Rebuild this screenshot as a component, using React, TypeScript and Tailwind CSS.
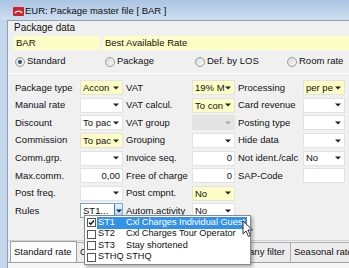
import React from "react";

const YEL = "bg-[#fdfdc6]";

type Cell =
  | { kind: "drop"; value?: string; yellow?: boolean; disabled?: boolean }
  | { kind: "num"; value: string }
  | { kind: "text"; value?: string }
  | { kind: "none" };

type Row = [string, Cell, string, Cell, string, Cell];

const rows: Row[] = [
  ["Package type", { kind: "drop", value: "Accon", yellow: true }, "VAT", { kind: "drop", value: "19% M", yellow: true }, "Processing", { kind: "drop", value: "per pe", yellow: true }],
  ["Manual rate", { kind: "drop" }, "VAT calcul.", { kind: "drop", value: "To con", yellow: true }, "Card revenue", { kind: "drop" }],
  ["Discount", { kind: "drop", value: "To pac" }, "VAT group", { kind: "drop", disabled: true }, "Posting type", { kind: "drop" }],
  ["Commission", { kind: "drop", value: "To pac", yellow: true }, "Grouping", { kind: "drop" }, "Hide data", { kind: "drop" }],
  ["Comm.grp.", { kind: "drop" }, "Invoice seq.", { kind: "num", value: "0" }, "Not ident./calc", { kind: "drop", value: "No" }],
  ["Max.comm.", { kind: "num", value: "0,00" }, "Free of charge", { kind: "num", value: "0" }, "SAP-Code", { kind: "text" }],
  ["Post freq.", { kind: "drop" }, "Post cmpnt.", { kind: "drop", value: "No", yellow: true }, "", { kind: "none" }],
  ["Rules", { kind: "none" }, "Autom.activity", { kind: "drop", value: "No" }, "", { kind: "none" }],
];

const Arrow = ({ gray }: { gray?: boolean }) => (
  <svg width="6" height="4" viewBox="0 0 6 4" className="shrink-0">
    <path d="M0 0.5 H6 L3 3.5 Z" fill={gray ? "#a8a8a8" : "#222"} />
  </svg>
);

const Field = ({ cell }: { cell: Cell }) => {
  if (cell.kind === "none") return <div />;
  if (cell.kind === "num" || cell.kind === "text")
    return (
      <div className="flex h-[15px] items-center justify-end self-center border border-[#e2e2e2] bg-white pr-[2px] leading-none">
        {cell.value}
      </div>
    );
  const bg = cell.disabled ? "bg-[#e4e4e4]" : cell.yellow ? YEL : "bg-white";
  return (
    <div className={`flex h-[15px] items-center self-center border border-[#e2e2e2] ${bg} pl-[2px] pr-[3px] leading-none`}>
      <span className="flex-1 overflow-hidden whitespace-nowrap">{cell.value}</span>
      <Arrow gray={cell.disabled} />
    </div>
  );
};

const Label = ({ text, first }: { text: string; first?: boolean }) => (
  <div className={`flex items-center overflow-hidden whitespace-nowrap ${first ? "" : "pl-[3px]"}`}>{text}</div>
);

const Radio = ({ label, checked }: { label: string; checked?: boolean }) => (
  <div className="flex items-center gap-[2px]">
    <div className="flex h-[10px] w-[10px] items-center justify-center rounded-full border border-[#9a9a9a] bg-gradient-to-br from-[#d8d8d8] to-[#fafafa]">
      {checked && <div className="h-[4px] w-[4px] rounded-full bg-[#2d4f78]" />}
    </div>
    <span>{label}</span>
  </div>
);

const Check = ({ checked }: { checked?: boolean }) => (
  <div className="flex h-[9px] w-[9px] shrink-0 items-center justify-center border border-[#555] bg-white">
    {checked && (
      <svg width="7" height="7" viewBox="0 0 7 7">
        <path d="M1 3.5 L2.8 5.3 L6 1.5" stroke="#111" strokeWidth="1.4" fill="none" />
      </svg>
    )}
  </div>
);

const items = [
  ["ST1", "Cxl Charges Individual Guest"],
  ["ST2", "Cxl Charges Tour Operator"],
  ["ST3", "Stay shortened"],
  ["STHQ", "STHQ"],
];

export default function App() {
  return (
    <div className="relative flex h-[268px] w-[349px] flex-col overflow-hidden bg-[#c4d6eb] font-['Liberation_Sans',Arial,sans-serif] text-[9.5px] text-[#111]">
      {/* title bar */}
      <div className="flex h-[20px] shrink-0 items-center bg-gradient-to-b from-[#aac4e2] to-[#d0dff0] pl-[13px] pt-[3px]">
        <svg width="11" height="9" viewBox="0 0 11 9" className="mr-[1px]">
          <rect width="11" height="9" rx="1" fill="#d3202a" />
          <path d="M2 6.2 C3 3.4 8 3.4 9 6.2" stroke="#fff" strokeWidth="1.2" fill="none" />
        </svg>
        <span className="text-[9.5px] text-[#111]">EUR: Package master file [ BAR ]</span>
      </div>

      <div className="flex flex-1 pl-[7px]">
        <div className="flex flex-1 flex-col border-l border-t border-[#8ea2bb] bg-[#f0f0f0]">
          {/* package data */}
          <div className="pl-[6px] pt-[1px] text-[10px] leading-[12px]">Package data</div>
          <div className="mt-[2px] flex h-[14px] gap-[3px] pl-[6px]">
            <div className={`flex w-[86px] items-center ${YEL} pl-[2px]`}>BAR</div>
            <div className={`flex flex-1 items-center ${YEL} pl-[2px]`}>Best Available Rate</div>
          </div>
          <div className="mt-[4px] flex h-[15px] items-center pl-[7px]">
            <div className="w-[90px]"><Radio label="Standard" checked /></div>
            <div className="w-[90px]"><Radio label="Package" /></div>
            <div className="w-[92px]"><Radio label="Def. by LOS" /></div>
            <Radio label="Room rate" />
          </div>
          <div className="mt-[4px] h-px bg-white" />

          {/* form grid */}
          <div className="mt-[5px] grid auto-rows-[17.6px] grid-cols-[65px_43px_69px_43px_68px_42px] pl-[7px]">
            {rows.map((r, i) => (
              <React.Fragment key={i}>
                <Label text={r[0]} first />
                {i === 7 ? (
                  <div className="flex h-[15px] self-center border border-[#7aa7d6] bg-white leading-none">
                    <span className="flex flex-1 items-center overflow-hidden whitespace-nowrap pl-[2px]">ST1...</span>
                    <div className="flex w-[8px] shrink-0 items-center justify-center border-l border-[#3c7fb1] bg-gradient-to-b from-[#e3f1fc] to-[#a9d3f4]">
                      <Arrow />
                    </div>
                  </div>
                ) : (
                  <Field cell={r[1]} />
                )}
                <Label text={r[2]} />
                <Field cell={r[3]} />
                <Label text={r[4]} />
                <Field cell={r[5]} />
              </React.Fragment>
            ))}
          </div>

          <div className="flex-1" />
          {/* tabs */}
          <div className="flex h-[22px] items-end border-t border-[#d0d0d0] pl-[2px]">
            <div className="flex h-[21px] w-[67px] items-center whitespace-nowrap border border-b-0 border-[#a0a0a0] bg-[#fbfbfb] pl-[3px]">Standard rate</div>
            <div className="flex h-[20px] w-[144px] items-center border border-b-0 border-l-0 border-[#b0b0b0] bg-[#ececec] pl-[3px]">Conditions</div>
            <div className="flex h-[20px] w-[70px] items-center justify-end whitespace-nowrap border border-b-0 border-l-0 border-[#b0b0b0] bg-[#ececec] pr-[5px]">Company filter</div>
            <div className="flex h-[20px] w-[70px] shrink-0 items-center whitespace-nowrap border border-b-0 border-l-0 border-[#b0b0b0] bg-[#ececec] pl-[3px]">Seasonal rate</div>
          </div>
          <div className="h-[6px] border-t border-[#a0a0a0] bg-[#f7f7f7]" />
        </div>
      </div>

      {/* dropdown popup */}
      <div className="absolute left-[84px] top-[215px] w-[167px] border border-[#8a8a8a] bg-white py-[1px] pl-[2px] pr-[3px] text-[9.2px] shadow-[2px_2px_3px_rgba(0,0,0,0.3)]">
        {items.map(([code, name], i) => (
          <div key={code} className="flex h-[11.5px] items-center">
            <Check checked={i === 0} />
            <div className={`ml-[1px] flex h-full flex-1 items-center overflow-hidden pl-[1px] ${i === 0 ? "bg-[#3391ea] text-white" : ""}`}>
              <span className="w-[28px] shrink-0">{code}</span>
              <span className="whitespace-nowrap">{name}</span>
            </div>
          </div>
        ))}
      </div>

      {/* mouse cursor */}
      <svg width="12" height="18" viewBox="0 0 12 18" className="absolute left-[242px] top-[220px]">
        <path d="M1 1 L1 14 L4 11 L6.5 16.5 L8.5 15.5 L6 10 L10.5 10 Z" fill="#fff" stroke="#333" strokeWidth="1" />
      </svg>
    </div>
  );
}
